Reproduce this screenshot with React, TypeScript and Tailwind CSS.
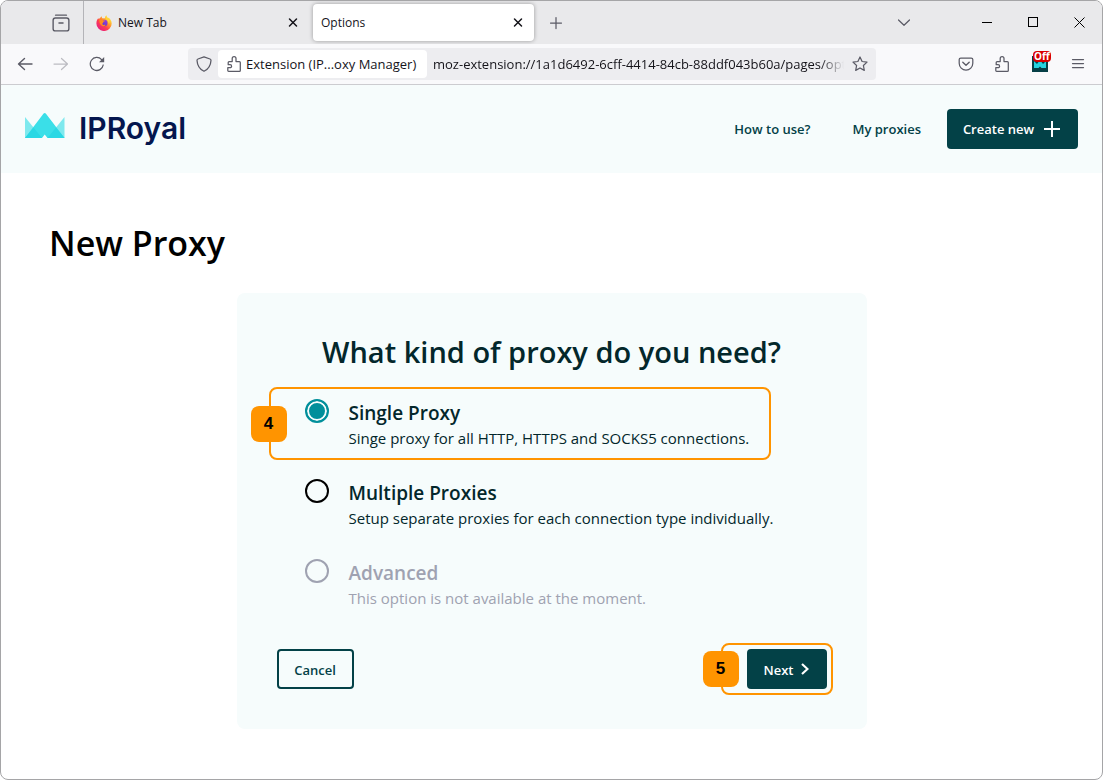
import type { ReactNode } from "react";

type IconProps = { children: ReactNode; className?: string };

const Icon = ({ children, className = "" }: IconProps) => (
  <svg
    className={`h-4 w-4 shrink-0 ${className}`}
    viewBox="0 0 16 16"
    fill="none"
    stroke="currentColor"
    strokeWidth="1.25"
    strokeLinecap="round"
    strokeLinejoin="round"
    aria-hidden="true"
  >
    {children}
  </svg>
);

const PuzzleIcon = () => (
  <Icon className="text-[#5b5b66]">
    <path d="M2.6 15.3h10.8a.9.9 0 0 0 .9-.9V6.4a.9.9 0 0 0-.9-.9H10V2.6a1.9 1.9 0 0 0-3.8 0v2.9H3.1a.9.9 0 0 0-.9.9v2.3h1.9a1.5 1.5 0 0 1 0 3H1.8v2.8c0 .5.3.8.8.8z" />
  </Icon>
);

const CloseIcon = () => (
  <Icon>
    <path d="M4.5 4l7 7M11.5 4l-7 7" strokeWidth="1.5" />
  </Icon>
);

const FirefoxLogo = () => (
  <svg className="h-4 w-4 shrink-0" viewBox="0 0 16 16" aria-hidden="true">
    <defs>
      <linearGradient id="fox-body" x1="14" y1="2" x2="3" y2="14" gradientUnits="userSpaceOnUse">
        <stop offset="0" stopColor="#fff44f" />
        <stop offset="0.35" stopColor="#ffa02b" />
        <stop offset="0.65" stopColor="#ff3f50" />
        <stop offset="1" stopColor="#e8207e" />
      </linearGradient>
      <linearGradient id="fox-globe" x1="10" y1="4" x2="6" y2="11" gradientUnits="userSpaceOnUse">
        <stop offset="0" stopColor="#a03be0" />
        <stop offset="1" stopColor="#5a38c8" />
      </linearGradient>
    </defs>
    <path
      d="M10.2 0.2c.2 1.5 1 2.2 2 3.1.2-.3.2-.6.2-.9 1.8 1.2 3.3 3.3 3.3 6a7.6 7.6 0 0 1-15.3 0c0-2.2.8-4.1 2.1-5.4v1.2c.4-.5 1-.9 1.5-1 .4-.9 1-1.5 1.8-1.9-.1.8.1 1.4.5 1.9h2.5c.3-1 .7-2.1 1.4-3z"
      fill="url(#fox-body)"
    />
    <circle cx="8.2" cy="8" r="3.3" fill="url(#fox-globe)" />
    <path
      d="M3.4 4.6c1.8-.7 3.2.1 4.1.8l1.7.1c-.2.9-.9 1-1.6 1.3-.5.3-.3.8-.8 1.2-.5.4-.7 1.3.1 1.8.9.5 1.9-.3 2.7.1-.8 1.4-3.1 1.7-4.5.4C3.7 8.9 3 6.5 3.4 4.6z"
      fill="#ff8a1e"
    />
    <path d="M10.2.2c.2 1.5 1 2.2 2 3.1 1.5 1.5 1.7 4 .7 6-.1-2-1-3.7-2.3-4.6C9.4 3.7 9.3 1.6 10.2.2z" fill="#ffd53a" />
  </svg>
);

const CrownLogo = () => (
  <svg className="h-[26px] w-10" viewBox="0 0 40 26" aria-hidden="true">
    <path d="M0 4v21h17z" fill="#7ee9ee" />
    <path d="M39.5 4v21h-17z" fill="#7ee9ee" />
    <path d="M18.6.5Q19.7-.4 20.8.5L39.5 25H22.5l-2.8-3.5L17 25H0z" fill="#3adfe8" />
    <path d="M8.5 14.5L0 25h17zM31 14.5L39.5 25h-17z" fill="#2ad8e4" />
  </svg>
);

const TabStrip = () => (
  <div className="flex h-[43px] items-stretch bg-[#e9e9eb] text-[#5b5b66]">
    <button aria-label="Firefox View" className="flex w-[83px] items-center justify-end border-r border-[#b4b4b8] pr-[13px]">
      <Icon className="h-[18px] w-[18px]">
        <path d="M3.2 1h9.6" />
        <rect x="1" y="3.5" width="14" height="11.5" rx="2" />
        <path d="M6.2 8h3.6" />
      </Icon>
    </button>
    <div className="flex w-[225px] items-center pr-2 pl-3 text-xs text-[#15141a]">
      <FirefoxLogo />
      <span className="ml-[6px] flex-1">New Tab</span>
      <button aria-label="Close New Tab">
        <CloseIcon />
      </button>
    </div>
    <div className="my-[3px] ml-1 flex w-[221px] items-center rounded bg-white pr-2 pl-2 text-xs text-[#15141a] shadow-[0_0_4px_rgba(0,0,0,0.35)]">
      <span className="flex-1">Options</span>
      <button aria-label="Close Options">
        <CloseIcon />
      </button>
    </div>
    <button aria-label="Open a new tab" className="ml-[14px]">
      <Icon>
        <path d="M8 2.5v11M2.5 8h11" />
      </Icon>
    </button>
    <div className="flex-1" />
    <button aria-label="List all tabs" className="mr-[52px]">
      <Icon>
        <path d="M2.5 5L8 10.3 13.5 5" />
      </Icon>
    </button>
    <div className="flex text-black">
      <button aria-label="Minimize" className="flex w-[46px] items-center justify-center">
        <svg className="h-[11px] w-[11px]" viewBox="0 0 11 11" stroke="currentColor">
          <path d="M0 5.5h10" />
        </svg>
      </button>
      <button aria-label="Maximize" className="flex w-[46px] items-center justify-center">
        <svg className="h-[11px] w-[11px]" viewBox="0 0 11 11" fill="none" stroke="currentColor">
          <rect x="0.5" y="0.5" width="9" height="9" />
        </svg>
      </button>
      <button aria-label="Close" className="flex w-[46px] items-center justify-center">
        <svg className="h-[11px] w-[11px]" viewBox="0 0 11 11" stroke="currentColor">
          <path d="M0.5 0.5l10 10M10.5 0.5l-10 10" />
        </svg>
      </button>
    </div>
  </div>
);

const Toolbar = () => (
  <div className="flex h-[41px] items-center border-b border-[#ccccd0] bg-[#f9f9fb] pr-4 pl-4 text-[#5b5b66]">
    <div className="flex gap-5">
      <button aria-label="Back">
        <Icon>
          <path d="M15 8H1.5M7.5 2.5L1.5 8l6 5.5" strokeWidth="1.4" />
        </Icon>
      </button>
      <button aria-label="Forward" disabled className="text-[#bcbcc2]">
        <Icon>
          <path d="M1 8h13.5M8.5 2.5l6 5.5-6 5.5" />
        </Icon>
      </button>
      <button aria-label="Reload">
        <Icon>
          <path d="M14.2 9A6.5 6.5 0 1 1 12.6 3.6" />
          <path d="M15.2 1v5.2H10z" fill="currentColor" stroke="none" />
        </Icon>
      </button>
    </div>
    <div className="ml-[83px] flex h-8 flex-1 items-center rounded bg-[#ededf0] pr-2 pl-2">
      <Icon>
        <path d="M8 .8l6 2.2c.8.3 1 .7 1 1.4C14.7 9.3 12.3 13.3 8 15.3 3.7 13.3 1.3 9.3 1 4.4 1 3.7 1.2 3.3 2 3z" />
      </Icon>
      <button className="ml-[6px] flex h-7 w-[209px] items-center gap-1 rounded-sm bg-white pl-2 text-[13px] whitespace-nowrap text-[#15141a]">
        <PuzzleIcon />
        <span className="pt-[2px]">Extension (IP...oxy Manager)</span>
      </button>
      <input
        aria-label="Address"
        className="ml-[6px] min-w-0 flex-1 bg-transparent mask-[linear-gradient(to_left,transparent,black_24px)] pt-[2px] text-[13px] text-[#15141a] outline-none"
        defaultValue="moz-extension://1a1d6492-6cff-4414-84cb-88ddf043b60a/pages/options.html"
      />
      <button aria-label="Bookmark this page" className="ml-2">
        <Icon>
          <path d="M8 1l2.1 4.5 4.9.6-3.6 3.4.9 4.9L8 12l-4.3 2.4.9-4.9L1 6.1l4.9-.6z" />
        </Icon>
      </button>
    </div>
    <div className="ml-[82px] flex items-center gap-5">
      <button aria-label="Save to Pocket">
        <Icon>
          <path d="M2.8 2h10.4c.9 0 1.6.7 1.6 1.6V7.3a6.8 6.8 0 0 1-13.6 0V3.6C1.2 2.7 1.9 2 2.8 2z" />
          <path d="M4.8 6.3L8 9.3l3.2-3" strokeWidth="1.4" />
        </Icon>
      </button>
      <button aria-label="Extensions">
        <PuzzleIcon />
      </button>
      <button aria-label="IPRoyal Proxy Manager" className="relative ml-[2px]">
        <svg className="h-4 w-4" viewBox="0 0 16 16" aria-hidden="true">
          <path d="M0 0h16v16H0z" fill="#063f46" />
          <path d="M2 5l3 3 3-4 3 4 3-3v7H9.5L8 10.5 6.5 12H2z" fill="#25d3e0" />
        </svg>
        <span className="absolute -top-[5px] left-[1px] rounded-sm bg-[#d90000] px-[1px] font-['Open_Sans'] text-[10px] leading-[11px] font-bold text-white">
          Off
        </span>
      </button>
      <button aria-label="Open application menu" className="ml-[2px]">
        <Icon>
          <path d="M2.5 3.5h11M2.5 7.5h11M2.5 11.5h11" />
        </Icon>
      </button>
    </div>
  </div>
);

const SiteHeader = () => (
  <header className="flex h-[88px] items-center justify-between bg-[#f6fcfc] pr-6 pl-6 text-[13px] font-semibold text-[#034147]">
    <a href="#home" className="flex items-baseline gap-[14px] pb-[2px]">
      <CrownLogo />
      <span className="font-['Inter'] text-[30px] leading-8 text-[#04164e]">IPRoyal</span>
    </a>
    <nav className="flex items-center">
      <a href="#how-to-use" className="mr-[42px] pt-[2px]">
        How to use?
      </a>
      <a href="#my-proxies" className="mr-[26px] pt-[2px]">
        My proxies
      </a>
      <button className="flex h-10 w-[131px] items-center justify-center gap-2 rounded bg-[#034147] text-white">
        <span className="pt-[2px]">Create new</span>
        <svg className="h-5 w-5" viewBox="0 0 20 20" stroke="currentColor" strokeWidth="2" aria-hidden="true">
          <path d="M10 2v16M2 10h16" />
        </svg>
      </button>
    </nav>
  </header>
);

const StepBadge = ({ children }: { children: ReactNode }) => (
  <span className="absolute top-1/2 -left-5 flex h-9 w-9 -translate-y-1/2 items-center justify-center rounded-lg bg-[#ff9400] font-['Liberation_Sans'] text-[17px] font-bold text-black">
    {children}
  </span>
);

const options = [
  {
    id: "single",
    title: "Single Proxy",
    text: "Singe proxy for all HTTP, HTTPS and SOCKS5 connections.",
    step: "4",
  },
  {
    id: "multiple",
    title: "Multiple Proxies",
    text: "Setup separate proxies for each connection type individually.",
  },
  {
    id: "advanced",
    title: "Advanced",
    text: "This option is not available at the moment.",
    disabled: true,
  },
];

const ProxyForm = () => (
  <form className="mx-auto mt-[26px] w-full max-w-[630px] rounded-lg bg-[#f6fcfc] px-10 pt-[39px] pb-10 text-[#03272b]">
    <h2 className="text-center text-[29px] leading-10 font-semibold">What kind of proxy do you need?</h2>
    <div className="mt-[26px] flex flex-col gap-6 pl-7">
      {options.map((option) => (
        <div key={option.id} className={`relative flex h-14 gap-5 ${option.disabled ? "text-[#9fa2b1]" : ""}`}>
          {option.step && (
            <div className="pointer-events-none absolute -top-[11px] -left-9 h-[73px] w-[502px] rounded-lg border-2 border-[#ff9400]">
              <StepBadge>{option.step}</StepBadge>
            </div>
          )}
          <input
            type="radio"
            name="kind"
            id={option.id}
            defaultChecked={option.id === "single"}
            disabled={option.disabled}
            className="mt-[1px] h-6 w-6 shrink-0 appearance-none rounded-full border-2 border-black checked:border-[#018f9b] checked:bg-[#018f9b] checked:shadow-[inset_0_0_0_2px_#f6fcfc] disabled:border-[#9fa2b1]"
          />
          <label htmlFor={option.id} className="flex flex-col pt-px whitespace-nowrap">
            <span className="text-[19px] leading-7 font-semibold">{option.title}</span>
            <span className="text-[15px] leading-[22px]">{option.text}</span>
          </label>
        </div>
      ))}
    </div>
    <div className="mt-[35px] flex items-center justify-between text-[13px] font-semibold">
      <button type="button" className="h-10 w-[77px] rounded border-2 border-[#034147] pt-[3px] text-[#034147]">
        Cancel
      </button>
      <div className="relative">
        <div className="pointer-events-none absolute -inset-y-[6px] -right-[6px] -left-[26px] rounded-lg border-2 border-[#ff9400]">
          <StepBadge>5</StepBadge>
        </div>
        <button type="button" className="relative flex h-10 w-20 items-center justify-center gap-2 rounded bg-[#034147] text-white">
          <span className="pt-[3px]">Next</span>
          <svg className="h-3 w-2" viewBox="0 0 8 12" fill="none" stroke="currentColor" strokeWidth="2.2" aria-hidden="true">
            <path d="M1 1l5.500 5L1 11" />
          </svg>
        </button>
      </div>
    </div>
  </form>
);

const App = () => (
  <div className="flex min-h-screen flex-col overflow-hidden rounded-lg border border-[#a5a5a7] bg-white font-['Open_Sans','Noto_Sans',sans-serif]">
    <TabStrip />
    <Toolbar />
    <SiteHeader />
    <main className="flex-1 px-12 pt-[46px] pb-[50px]">
      <h1 className="text-[34px] leading-[48px] font-semibold text-black">New Proxy</h1>
      <ProxyForm />
    </main>
  </div>
);

export default App;
